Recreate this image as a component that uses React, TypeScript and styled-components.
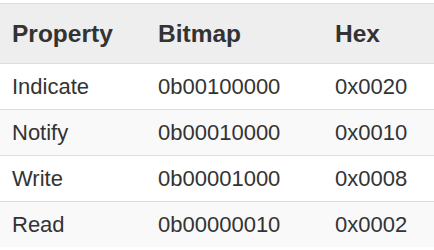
import * as React from "react";
import styled, { createGlobalStyle } from "styled-components";

const GlobalStyle = createGlobalStyle`
  html, body {
    margin: 0;
    padding: 0;
    background: #fff;
  }
  body {
    padding-top: 3px;
    font-family: "Liberation Sans", Arial, sans-serif;
    color: #333;
  }
`;

const Table = styled.table`
  width: 434px;
  border-collapse: collapse;
  border-spacing: 0;
  border-top: 1px solid #ddd;
`;

const HeadRow = styled.tr`
  background: #eeeeee;
`;

const Th = styled.th`
  height: 60px;
  padding: 0 12px;
  text-align: left;
  font-size: 24.5px;
  font-weight: bold;
  color: #333;
  border-bottom: 1px solid #ddd;
  box-sizing: border-box;
`;

const Row = styled.tr<{ $striped: boolean }>`
  background: ${(p) => (p.$striped ? "#f9f9f9" : "#fff")};
`;

const Td = styled.td`
  height: 45px;
  padding: 0 12px;
  font-size: 22px;
  color: #333;
  border-top: 1px solid #ddd;
`;

const rows = [
  { property: "Indicate", bitmap: "0b00100000", hex: "0x0020" },
  { property: "Notify", bitmap: "0b00010000", hex: "0x0010" },
  { property: "Write", bitmap: "0b00001000", hex: "0x0008" },
  { property: "Read", bitmap: "0b00000010", hex: "0x0002" },
];

const App: React.FC = () => {
  return (
    <>
      <GlobalStyle />
      <Table>
        <colgroup>
          <col style={{ width: 146 }} />
          <col style={{ width: 177 }} />
          <col />
        </colgroup>
        <thead>
          <HeadRow>
            <Th>Property</Th>
            <Th>Bitmap</Th>
            <Th>Hex</Th>
          </HeadRow>
        </thead>
        <tbody>
          {rows.map((r, i) => (
            <Row key={r.property} $striped={i % 2 === 1}>
              <Td>{r.property}</Td>
              <Td>{r.bitmap}</Td>
              <Td>{r.hex}</Td>
            </Row>
          ))}
        </tbody>
      </Table>
    </>
  );
};

export default App;
